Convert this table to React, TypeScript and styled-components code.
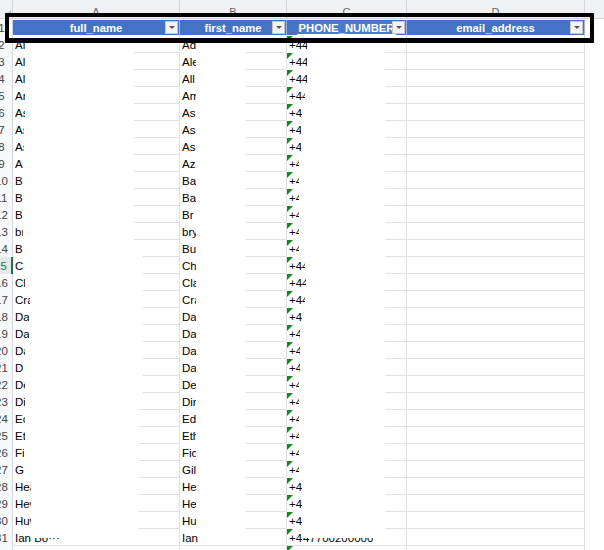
import React from "react";
import styled, { createGlobalStyle } from "styled-components";

const GlobalStyle = createGlobalStyle`
  html, body { margin: 0; padding: 0; background: #ffffff; }
  body { font-family: "Liberation Sans", Arial, sans-serif; }
`;

const GRID = "#e1e1e1";
const HEAD_BG = "#eff1f3";
const HEAD_LINE = "#d4d6d9";
const BLUE = "#4472c4";
const GREEN = "#217346";

const Sheet = styled.div`
  position: relative;
  width: 604px;
  height: 550px;
  overflow: hidden;
  display: grid;
  grid-template-columns: 13px 167px 107px 120px 178px 19px;
  grid-template-rows: 19px repeat(32, 17px);
  font-family: "Liberation Sans", Arial, sans-serif;
  background: #ffffff;
`;

const Corner = styled.div`
  position: relative;
  box-sizing: border-box;
  background: ${HEAD_BG};
  border-right: 1px solid ${HEAD_LINE};
  border-bottom: 1px solid ${HEAD_LINE};
  &::after {
    content: "";
    position: absolute;
    right: 1px;
    bottom: 2px;
    width: 0;
    height: 0;
    border-left: 6px solid transparent;
    border-bottom: 6px solid #b4b4b4;
  }
`;

const ColLetter = styled.div<{ $plain?: boolean }>`
  box-sizing: border-box;
  background: ${HEAD_BG};
  border-right: ${(p) => (p.$plain ? "none" : `1px solid ${HEAD_LINE}`)};
  border-bottom: 1px solid ${HEAD_LINE};
  color: #666666;
  font-size: 11px;
  line-height: 11px;
  padding-top: 7px;
  display: flex;
  justify-content: center;
  align-items: center;
`;

const RowNum = styled.div<{ $active?: boolean }>`
  box-sizing: border-box;
  background: ${(p) => (p.$active ? "#e6e8ea" : "#f7f8f9")};
  border-right: ${(p) => (p.$active ? `2px solid ${GREEN}` : `1px solid ${HEAD_LINE}`)};
  color: ${(p) => (p.$active ? GREEN : "#444444")};
  font-size: 11.5px;
  display: flex;
  justify-content: flex-end;
  align-items: center;
  overflow: hidden;
`;

const RowNumText = styled.span`
  flex: none;
  width: 21px;
  text-align: center;
`;

const HeaderCell = styled.div<{ $empty?: boolean }>`
  position: relative;
  box-sizing: border-box;
  background: ${(p) => (p.$empty ? "#ffffff" : BLUE)};
  border-top: 1px solid #ffffff;
  border-bottom: 1px solid #ffffff;
  border-right: ${(p) => (p.$empty ? "none" : "1px solid #9fb6e0")};
  color: #ffffff;
  font-weight: bold;
  font-size: 11.3px;
  display: flex;
  align-items: center;
  justify-content: center;
  white-space: nowrap;
  overflow: hidden;
`;

const HeaderLabel = styled.span<{ $marked?: boolean }>`
  padding: 1px 1px 0;
  background: ${(p) => (p.$marked ? "#4b7acb" : "transparent")};
  border-bottom: ${(p) => (p.$marked ? "1px solid #ffffff" : "none")};
`;

const Dropdown = styled.span`
  position: absolute;
  right: 1px;
  top: 1px;
  width: 13px;
  height: 13px;
  box-sizing: border-box;
  background: #f2f2f2;
  border: 1px solid #c6c6c6;
  display: flex;
  align-items: center;
  justify-content: center;
  &::after {
    content: "";
    width: 0;
    height: 0;
    border-left: 3px solid transparent;
    border-right: 3px solid transparent;
    border-top: 3px solid #555555;
  }
`;

const Cell = styled.div<{ $line: number; $flag?: boolean; $bare?: boolean }>`
  position: relative;
  box-sizing: border-box;
  border-right: ${(p) => (p.$bare ? "none" : `1px solid ${GRID}`)};
  background: #ffffff
    linear-gradient(${GRID}, ${GRID}) no-repeat right bottom / ${(p) => p.$line}px 1px;
  color: #000000;
  font-size: 11.5px;
  display: flex;
  align-items: center;
  padding-left: 2px;
  white-space: nowrap;
  overflow: hidden;
  &::before {
    content: "";
    display: ${(p) => (p.$flag ? "block" : "none")};
    position: absolute;
    left: 0;
    top: 0;
    width: 0;
    height: 0;
    border-top: 6px solid #138a1e;
    border-right: 6px solid transparent;
  }
`;

const Fragment = styled.span`
  display: block;
  flex: none;
  overflow: hidden;
`;

const HalfHidden = styled.span`
  display: block;
  flex: none;
  clip-path: inset(55% 0 0 0);
`;

const Frame = styled.div`
  position: absolute;
  left: 5px;
  top: 13px;
  width: 589px;
  height: 30px;
  box-sizing: border-box;
  border-style: solid;
  border-color: #000000;
  border-width: 4px 4px 5px 4px;
  pointer-events: none;
`;

type Frag = [string, number];

const colA: Frag[] = [
  ["Al", 10], ["Al", 10], ["Al", 10], ["An", 10], ["As", 10], ["As", 9], ["As", 9], ["A", 8],
  ["B", 8], ["B", 8], ["B", 8], ["br", 8], ["B", 8], ["C", 9], ["Cl", 10], ["Cra", 15],
  ["Dar", 14], ["Dar", 14], ["Da", 10], ["Da", 8], ["De", 10], ["Di", 10], ["Ec", 10], ["Et", 10],
  ["Fi", 9], ["Ga", 9], ["Hea", 16], ["Hew", 16], ["Huw", 16], ["Ian", 16],
];

const colB: Frag[] = [
  ["Ad", 14], ["Ale", 14], ["All", 14], ["Am", 14], ["As", 14], ["As", 14], ["As", 14], ["Az", 14],
  ["Ba", 14], ["Ba", 14], ["Br", 14], ["bry", 14], ["Bu", 14], ["Chr", 14], ["Cla", 14], ["Cra", 14],
  ["Dan", 14], ["Dan", 14], ["Dan", 14], ["Dan", 14], ["Den", 14], ["Din", 14], ["Edd", 14], ["Eth", 14],
  ["Fio", 14], ["Gil", 14], ["Hel", 14], ["Hel", 14], ["Hug", 14], ["Ian", 16],
];

const cWidths = [
  18, 18, 18, 16, 13, 12, 12, 10, 10, 10, 10, 10, 10, 16, 17, 16, 13, 11, 11, 11, 10, 10, 10, 10, 10,
  10, 13, 13, 13, 14,
];

const aLine = (i: number) => (i === 29 ? 167 : i < 12 ? 45 : i < 21 ? 36 : 40);

export default function App() {
  const rows = Array.from({ length: 30 }, (_, i) => i);
  return (
    <>
      <GlobalStyle />
      <Sheet>
        <Corner />
        <ColLetter>A</ColLetter>
        <ColLetter>B</ColLetter>
        <ColLetter>C</ColLetter>
        <ColLetter>D</ColLetter>
        <ColLetter $plain />

        <RowNum>
          <RowNumText>1</RowNumText>
        </RowNum>
        <HeaderCell>
          <HeaderLabel>full_name</HeaderLabel>
          <Dropdown />
        </HeaderCell>
        <HeaderCell>
          <HeaderLabel>first_name</HeaderLabel>
          <Dropdown />
        </HeaderCell>
        <HeaderCell>
          <HeaderLabel $marked>PHONE_NUMBER</HeaderLabel>
          <Dropdown />
        </HeaderCell>
        <HeaderCell>
          <HeaderLabel>email_address</HeaderLabel>
          <Dropdown />
        </HeaderCell>
        <HeaderCell $empty />

        {rows.map((i) => {
          const n = i + 2;
          const last = i === 29;
          return (
            <React.Fragment key={n}>
              <RowNum $active={n === 15}>
                <RowNumText>{n}</RowNumText>
              </RowNum>
              <Cell $line={aLine(i)}>
                <Fragment style={{ width: colA[i][1] }}>{colA[i][0]}</Fragment>
                {last && <HalfHidden>&nbsp;Bo···</HalfHidden>}
              </Cell>
              <Cell $line={last ? 107 : 41}>
                <Fragment style={{ width: colB[i][1] }}>{colB[i][0]}</Fragment>
              </Cell>
              <Cell $line={last ? 120 : 21} $flag>
                <Fragment style={{ width: cWidths[i] }}>{last ? "+4" : "+44"}</Fragment>
                {last && <HalfHidden>47700200000</HalfHidden>}
              </Cell>
              <Cell $line={178} />
              <Cell $line={0} $bare />
            </React.Fragment>
          );
        })}

        <RowNum>
          <RowNumText>32</RowNumText>
        </RowNum>
        <Cell $line={167} />
        <Cell $line={107} />
        <Cell $line={120} $flag />
        <Cell $line={178} />
        <Cell $line={0} $bare />

        <Frame />
      </Sheet>
    </>
  );
}
